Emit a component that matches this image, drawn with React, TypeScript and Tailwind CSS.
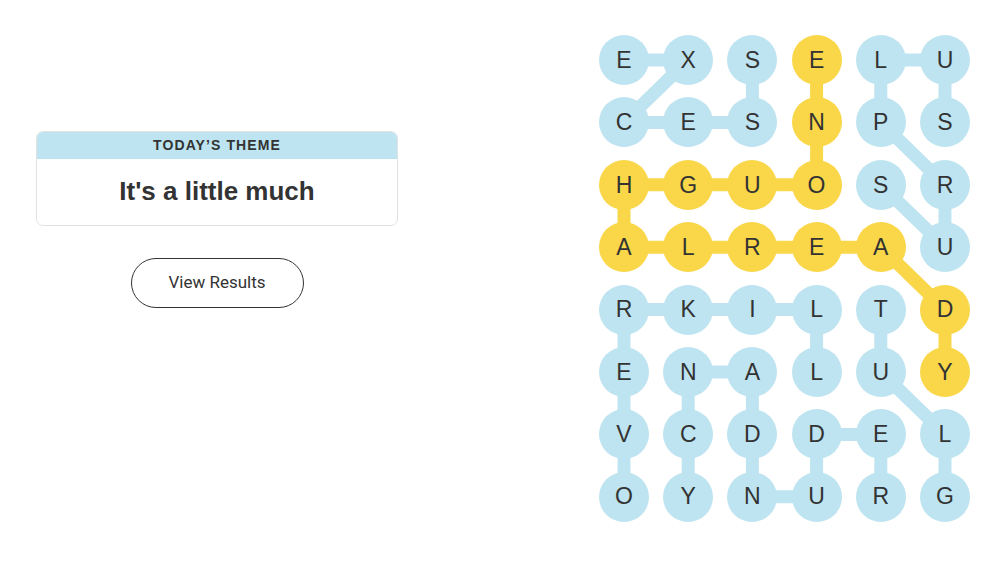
import React from 'react'

const BLUE = '#bde4f0'
const YELLOW = '#f9d748'

const letters = [
  'EXSELU',
  'CESNPS',
  'HGUOSR',
  'ALREAU',
  'RKILTD',
  'ENALUY',
  'VCDDEL',
  'OYNURG',
]

// cells that belong to the spangram
const spangram = new Set([
  '0,3', '1,3', '2,3', '2,2', '2,1', '2,0',
  '3,0', '3,1', '3,2', '3,3', '3,4', '4,5', '5,5',
])

type Link = [number, number, number, number, 'b' | 'y']

const links: Link[] = [
  // EXCESS
  [0, 0, 0, 1, 'b'], [0, 1, 1, 0, 'b'], [1, 0, 1, 1, 'b'], [1, 1, 1, 2, 'b'], [1, 2, 0, 2, 'b'],
  // SURPLUS
  [2, 4, 3, 5, 'b'], [3, 5, 2, 5, 'b'], [2, 5, 1, 4, 'b'], [1, 4, 0, 4, 'b'], [0, 4, 0, 5, 'b'], [0, 5, 1, 5, 'b'],
  // ENOUGH ALREADY
  [0, 3, 1, 3, 'y'], [1, 3, 2, 3, 'y'], [2, 3, 2, 2, 'y'], [2, 2, 2, 1, 'y'], [2, 1, 2, 0, 'y'],
  [2, 0, 3, 0, 'y'], [3, 0, 3, 1, 'y'], [3, 1, 3, 2, 'y'], [3, 2, 3, 3, 'y'], [3, 3, 3, 4, 'y'],
  [3, 4, 4, 5, 'y'], [4, 5, 5, 5, 'y'],
  // OVERKILL
  [7, 0, 6, 0, 'b'], [6, 0, 5, 0, 'b'], [5, 0, 4, 0, 'b'], [4, 0, 4, 1, 'b'], [4, 1, 4, 2, 'b'], [4, 2, 4, 3, 'b'], [4, 3, 5, 3, 'b'],
  // REDUNDANCY
  [7, 4, 6, 4, 'b'], [6, 4, 6, 3, 'b'], [6, 3, 7, 3, 'b'], [7, 3, 7, 2, 'b'], [7, 2, 6, 2, 'b'], [6, 2, 5, 2, 'b'], [5, 2, 5, 1, 'b'], [5, 1, 6, 1, 'b'], [6, 1, 7, 1, 'b'],
  // GLUT
  [7, 5, 6, 5, 'b'], [6, 5, 5, 4, 'b'], [5, 4, 4, 4, 'b'],
]

const COL = 64.2
const ROW = 62.4
const cx = (c: number) => 25 + c * COL
const cy = (r: number) => 25 + r * ROW

function Board() {
  return (
    <div className="relative w-[371px] h-[487px]">
      <svg className="absolute inset-0" width={371} height={487}>
        {links.map(([r1, c1, r2, c2, k], i) => (
          <line
            key={i}
            x1={cx(c1)}
            y1={cy(r1)}
            x2={cx(c2)}
            y2={cy(r2)}
            stroke={k === 'y' ? YELLOW : BLUE}
            strokeWidth={13}
          />
        ))}
      </svg>
      <div className="relative grid grid-cols-[repeat(6,50px)] grid-rows-[repeat(8,50px)] gap-x-[14.2px] gap-y-[12.4px]">
        {letters.map((row, r) =>
          row.split('').map((ch, c) => (
            <div
              key={`${r}-${c}`}
              className={`w-[50px] h-[50px] rounded-full flex items-center justify-center text-[23px] text-[#333] font-['Liberation_Sans',sans-serif] ${
                spangram.has(`${r},${c}`) ? 'bg-[#f9d748]' : 'bg-[#bde4f0]'
              }`}
            >
              {ch}
            </div>
          ))
        )}
      </div>
    </div>
  )
}

export default function App() {
  return (
    <div className="w-[1000px] h-[561px] bg-white flex items-start font-['Roboto',sans-serif]">
      <div className="ml-[36px] mt-[131px] w-[362px] flex flex-col items-center">
        <div className="w-full border border-[#e2e2e2] rounded-[7px] overflow-hidden">
          <div className="h-[27px] bg-[#bde4f0] flex items-center justify-center text-[14px] font-bold tracking-[1.1px] text-[#333] font-['Liberation_Sans',sans-serif]">
            TODAY’S THEME
          </div>
          <div className="h-[66px] flex items-center justify-center text-[26px] font-bold text-[#333] pb-[2px] font-['Liberation_Sans',sans-serif]">
            It's a little much
          </div>
        </div>
        <button className="mt-[32px] w-[173px] h-[50px] rounded-full border border-[#333] text-[17px] text-[#333]">
          View Results
        </button>
      </div>
      <div className="ml-[201px] mt-[35px]">
        <Board />
      </div>
    </div>
  )
}
